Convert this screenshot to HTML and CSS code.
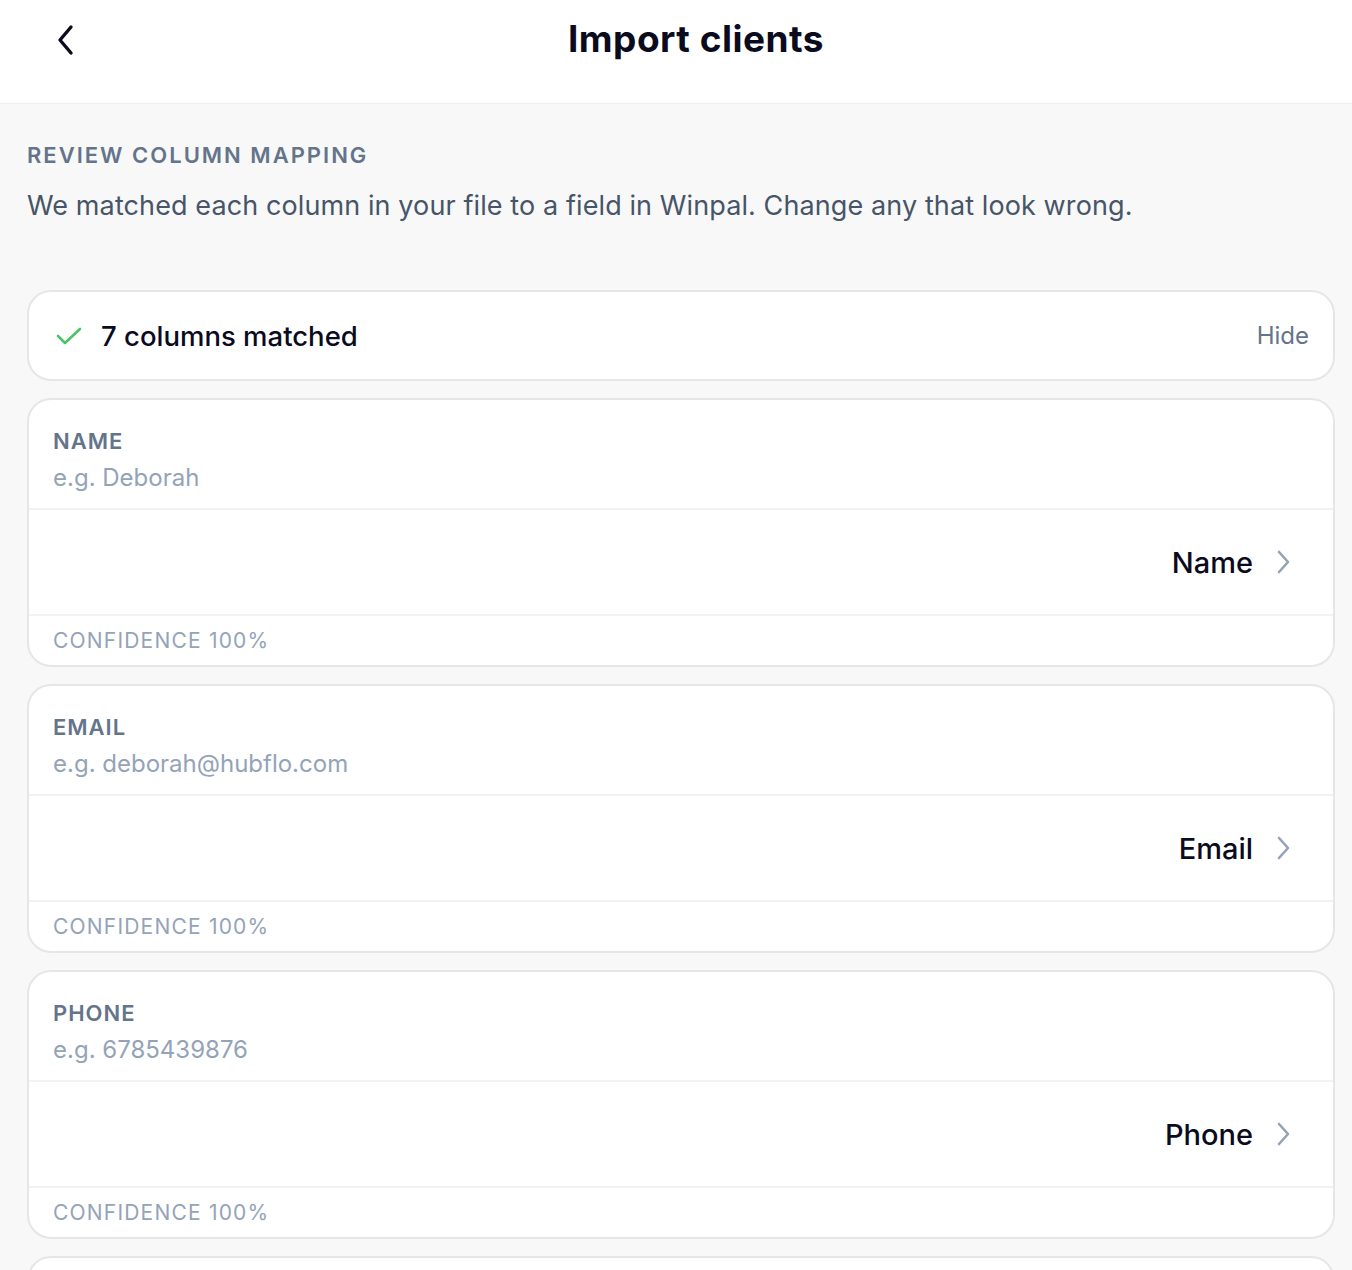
FILE: index.html
```html
<!DOCTYPE html>
<html lang="en">
<head>
    <meta charset="UTF-8">
    <meta name="viewport" content="width=device-width, initial-scale=1.0">
    <title>Import clients</title>
    <link rel="stylesheet" href="styles.css">
</head>
<body>
    <header class="top-bar">
        <button class="back-button" aria-label="Back">
            <svg width="24" height="32" viewBox="0 0 24 32" fill="none" stroke="currentColor" stroke-width="3.4" stroke-linecap="round" stroke-linejoin="round">
                <polyline points="17,3 6,16 17,29"></polyline>
            </svg>
        </button>
        <h1>Import clients</h1>
    </header>

    <main class="content">
        <h2 class="section-title">Review column mapping</h2>
        <p class="section-text">We matched each column in your file to a field in Winpal. Change any that look wrong.</p>

        <!-- Summary row -->
        <div class="summary">
            <div class="summary-left">
                <svg class="check-icon" width="28" height="22" viewBox="0 0 28 22" fill="none" stroke="currentColor" stroke-width="2.6" stroke-linecap="round" stroke-linejoin="round">
                    <polyline points="3,11 10,18 25,4"></polyline>
                </svg>
                <span>7 columns matched</span>
            </div>
            <button class="hide-button">Hide</button>
        </div>

        <!-- Mapping cards -->
        <div class="mapping-card">
            <div class="mapping-source">
                <div class="column-name">Name</div>
                <div class="column-example">e.g. Deborah</div>
            </div>
            <div class="mapping-target">
                <span>Name</span>
                <svg class="chevron" width="16" height="26" viewBox="0 0 16 26" fill="none" stroke="currentColor" stroke-width="2.6" stroke-linecap="round" stroke-linejoin="round">
                    <polyline points="4,3 13,13 4,23"></polyline>
                </svg>
            </div>
            <div class="mapping-confidence">Confidence 100%</div>
        </div>

        <div class="mapping-card">
            <div class="mapping-source">
                <div class="column-name">Email</div>
                <div class="column-example">e.g. deborah@hubflo.com</div>
            </div>
            <div class="mapping-target">
                <span>Email</span>
                <svg class="chevron" width="16" height="26" viewBox="0 0 16 26" fill="none" stroke="currentColor" stroke-width="2.6" stroke-linecap="round" stroke-linejoin="round">
                    <polyline points="4,3 13,13 4,23"></polyline>
                </svg>
            </div>
            <div class="mapping-confidence">Confidence 100%</div>
        </div>

        <div class="mapping-card">
            <div class="mapping-source">
                <div class="column-name">Phone</div>
                <div class="column-example">e.g. 6785439876</div>
            </div>
            <div class="mapping-target">
                <span>Phone</span>
                <svg class="chevron" width="16" height="26" viewBox="0 0 16 26" fill="none" stroke="currentColor" stroke-width="2.6" stroke-linecap="round" stroke-linejoin="round">
                    <polyline points="4,3 13,13 4,23"></polyline>
                </svg>
            </div>
            <div class="mapping-confidence">Confidence 100%</div>
        </div>

        <div class="mapping-card is-empty"></div>
    </main>
</body>
</html>
```

FILE: styles.css
```css
body {
    margin: 0;
    padding: 0;
    font-family: Inter, "Noto Sans", sans-serif;
    background-color: #f8f8f8;
    color: #0b0b1e;
    overflow: hidden;
}

/* Top bar */
.top-bar {
    height: 104px;
    box-sizing: border-box;
    background: white;
    border-bottom: 1px solid #efefef;
    display: flex;
    align-items: center;
    justify-content: center;
    padding: 0 0 26px 40px;
    position: relative;
}

.top-bar h1 {
    margin: 0;
    font-size: 37px;
    font-weight: 700;
    letter-spacing: 0.5px;
    color: #0b0b1e;
}

.back-button {
    position: absolute;
    left: 54px;
    top: 24px;
    background: none;
    border: none;
    padding: 0;
    color: #0b0b1e;
    cursor: pointer;
}

/* Page content */
.content {
    padding: 22px 17px 0 27px;
}

.section-title {
    margin: 14px 0 0;
    font-size: 22px;
    font-weight: 600;
    text-transform: uppercase;
    letter-spacing: 2px;
    color: #64748b;
    line-height: 30px;
}

.section-text {
    margin: 20px 0 0;
    font-size: 27px;
    letter-spacing: 0.1px;
    color: #475569;
    line-height: 32px;
}

/* Summary */
.summary {
    margin-top: 68px;
    height: 91px;
    box-sizing: border-box;
    background: white;
    border: 2px solid #e6e6e6;
    border-radius: 24px;
    display: flex;
    align-items: center;
    justify-content: space-between;
    padding: 0 24px 0 26px;
}

.summary-left {
    display: flex;
    align-items: center;
    gap: 18px;
    font-size: 27.5px;
    font-weight: 500;
    color: #0b0b1e;
}

.check-icon {
    color: #4cc466;
}

.hide-button {
    background: none;
    border: none;
    padding: 0;
    font-family: inherit;
    font-size: 24px;
    color: #64748b;
    cursor: pointer;
}

/* Mapping cards */
.mapping-card {
    margin-top: 17px;
    background: white;
    border: 2px solid #e6e6e6;
    border-radius: 24px;
    overflow: hidden;
}

.mapping-card.is-empty {
    height: 120px;
}

.mapping-source {
    height: 110px;
    box-sizing: border-box;
    padding: 27px 24px 0;
    border-bottom: 2px solid #f2f2f2;
}

.column-name {
    font-size: 22px;
    font-weight: 600;
    text-transform: uppercase;
    letter-spacing: 1px;
    color: #64748b;
    line-height: 28px;
}

.column-example {
    margin-top: 9px;
    font-size: 24px;
    color: #94a3b8;
    line-height: 28px;
}

.mapping-target {
    height: 104px;
    box-sizing: border-box;
    display: flex;
    align-items: center;
    justify-content: flex-end;
    gap: 22px;
    padding-right: 42px;
    font-size: 29px;
    font-weight: 500;
    color: #0b0b1e;
}

.chevron {
    color: #94a3b8;
}

.mapping-confidence {
    height: 51px;
    box-sizing: border-box;
    border-top: 2px solid #f2f2f2;
    padding: 0 24px;
    display: flex;
    align-items: center;
    font-size: 21px;
    text-transform: uppercase;
    letter-spacing: 1.2px;
    color: #94a3b8;
}
```
